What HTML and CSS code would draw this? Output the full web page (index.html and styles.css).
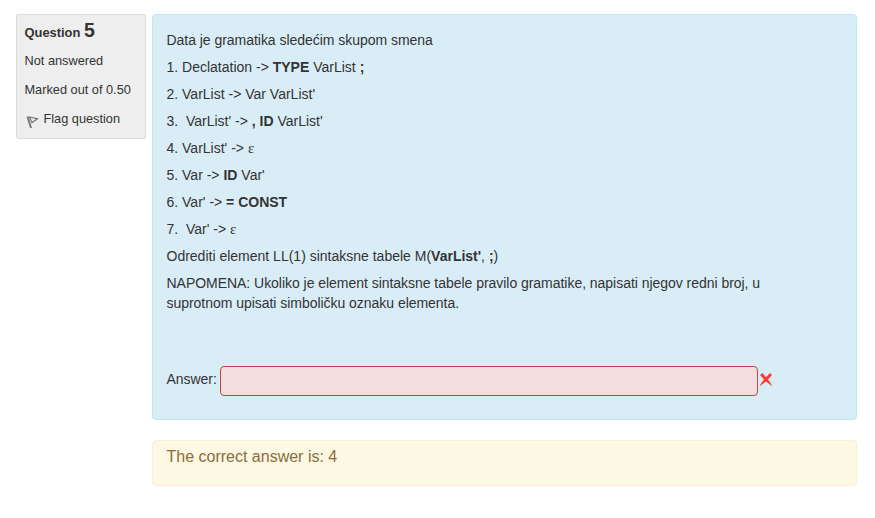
FILE: index.html
```html
<!DOCTYPE html>
<html lang="en">
<head>
<meta charset="utf-8">
<title>Question 5</title>
<link rel="stylesheet" href="styles.css">
</head>
<body>
<main class="question">
  <aside class="info">
    <h3 class="number">Question <span class="qno">5</span></h3>
    <div class="state">Not answered</div>
    <div class="grade">Marked out of 0.50</div>
    <div class="flag"><svg class="flag-icon" width="14" height="14" viewBox="0 0 14 14"><path d="M1.5 1.5L5 13" fill="none" stroke="#777" stroke-width="2"/><path d="M3.5 2L11.5 3.8L6 7.5Z" fill="#eee" stroke="#777" stroke-width="1.2"/></svg><span>Flag question</span></div>
  </aside>
  <div class="content">
    <section class="formulation">
      <p class="intro">Data je gramatika sledećim skupom smena</p>
      <p>1. Declatation -&gt; <b>TYPE</b> VarList <b>;</b></p>
      <p>2. VarList -&gt; Var VarList'</p>
      <p>3.&nbsp; VarList' -&gt; <b>, ID</b> VarList'</p>
      <p>4. VarList' -&gt; <span class="epsilon">ε</span></p>
      <p>5. Var -&gt; <b>ID</b> Var'</p>
      <p>6. Var' -&gt; <b>= CONST</b></p>
      <p>7.&nbsp; Var' -&gt; <span class="epsilon">ε</span></p>
      <p>Odrediti element LL(1) sintaksne tabele M(<b>VarList'</b>, <b>;</b>)</p>
      <p class="note">NAPOMENA: Ukoliko je element sintaksne tabele pravilo gramatike, napisati njegov redni broj, u suprotnom upisati simboličku oznaku elementa.</p>
      <div class="answer"><label for="answer">Answer:</label><input id="answer" type="text" readonly><svg class="cross" width="14" height="16" viewBox="0 0 14 16"><path d="M1 3L3.5 1L7 5.3L11 1L13 3L9 7.5Q11.5 10 13 14.5Q10 11.5 7 9.5Q4 11.5 .7 14.5Q2.2 10.5 5 7.5Z" fill="#ff3b36"/></svg></div>
    </section>
    <section class="feedback">The correct answer is: 4</section>
  </div>
</main>
</body>
</html>
```

FILE: styles.css
```css
* { box-sizing: border-box; }
body { margin: 0; background: #fff; color: #333; font: 14px/20px "Liberation Sans", Arial, sans-serif; }
.question { display: flex; align-items: flex-start; gap: 6px; padding: 14px 18px 0 16px; }
.info { width: 130px; height: 125px; flex: none; padding: 6px 0 0 7.5px; background: #eee; border: 1px solid #dcdcdc; border-radius: 2px; font-size: 12.75px; }
.number { height: 20px; margin: 0; font-size: 12.9px; line-height: 20px; }
.qno { font-size: 19.5px; line-height: 1; }
.state { margin-top: 10px; }
.grade, .flag { margin-top: 9px; }
.flag { display: flex; gap: 3px; }
.flag-icon { margin: 6px 1px 0 1px; }
.content { flex: 1; min-width: 0; }
.formulation { height: 406px; padding: 15px 13.5px 0; background: #d9edf7; border: 1px solid #bce8f1; border-radius: 4px; }
.formulation p { margin: 0 0 7px; }
.intro, .note { letter-spacing: -.035px; }
.note { max-width: 610px; }
.epsilon { font-family: "Liberation Serif", serif; font-size: 15px; line-height: 1; }
.answer { display: flex; align-items: center; margin-top: 53px; letter-spacing: -.035px; }
.answer label { width: 50.5px; margin-top: -4px; white-space: nowrap; }
.answer input { width: 538px; height: 30px; margin: 0 1px 0 3px; border: 1px solid #b94a48; border-radius: 4px; background: #f2dede; outline: 0; }
.cross { margin-top: -2px; }
.feedback { height: 46px; margin-top: 20px; padding: 6px 13.5px; background: #fcf8e3; border: 1px solid #fbeed5; border-radius: 4px; color: #8a6d3b; font-size: 16px; }
```
